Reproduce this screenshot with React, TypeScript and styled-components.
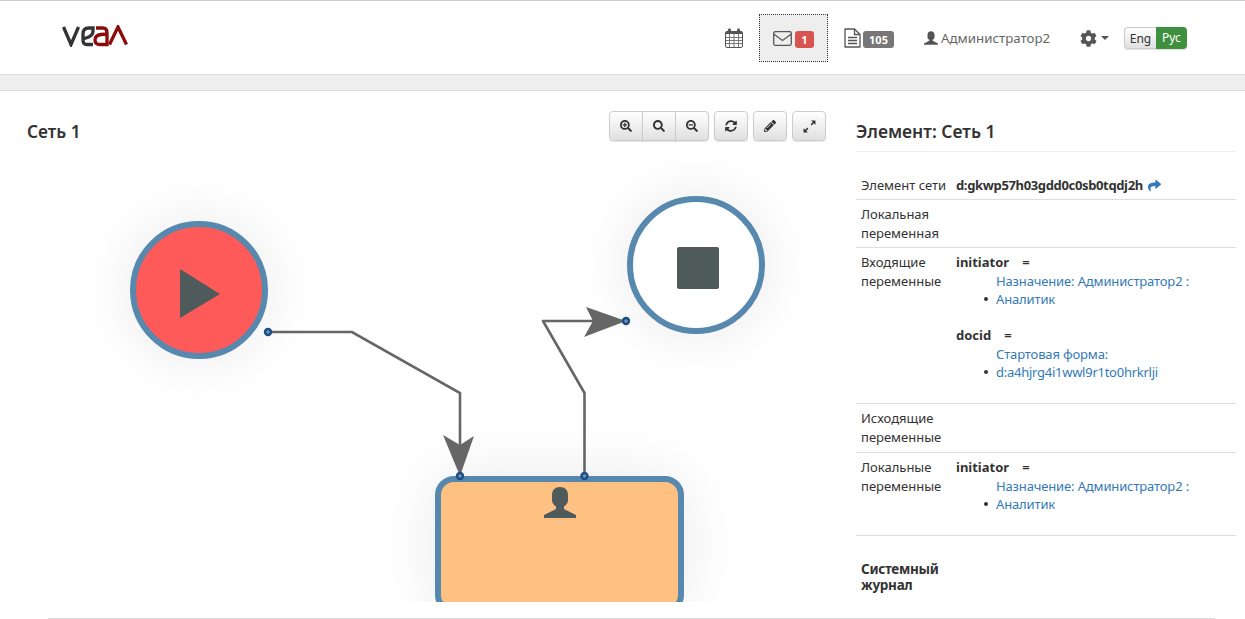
import * as React from 'react';
import styled, { createGlobalStyle } from 'styled-components';
import { FaCog, FaPencilAlt, FaSearch, FaSearchMinus, FaSearchPlus, FaShare, FaSyncAlt } from 'react-icons/fa';

const GlobalStyle = createGlobalStyle`
  html, body {
    margin: 0;
    padding: 0;
    background: #fff;
    overflow: hidden;
  }
  body {
    font-family: "Noto Sans", "Open Sans", sans-serif;
    font-size: 13px;
    line-height: 18.57px;
    color: #333;
  }
`;

const Page = styled.div`
  width: 1245px;
  height: 619px;
  overflow: hidden;
  display: flex;
  flex-direction: column;
`;

const Header = styled.header`
  height: 73px;
  border-top: 1px solid #ccc;
  display: flex;
  align-items: center;
  padding: 0 58px 0 62px;
`;

const LogoSvg = styled.svg`
  width: 66px;
  height: 22px;
  margin-top: -3px;
  flex: none;
`;

const Nav = styled.nav`
  margin-left: auto;
  display: flex;
  align-items: center;
  height: 48px;
  margin-top: 1px;
`;

const NavIcon = styled.span`
  display: flex;
  align-items: center;
  color: #555;
`;

const CalendarItem = styled.div`
  display: flex;
  align-items: center;
  margin-right: 16px;
`;

const MailItem = styled.div`
  width: 69px;
  height: 48px;
  box-sizing: border-box;
  border: 1px dotted #333;
  background: #eee;
  display: flex;
  align-items: center;
  justify-content: center;
  gap: 3px;
  margin-right: 16px;
`;

const FileItem = styled.div`
  display: flex;
  align-items: center;
  gap: 2px;
  margin-right: 30px;
`;

const Badge = styled.span<{ $bg: string; $w: number }>`
  width: ${(p) => p.$w}px;
  height: 17px;
  margin-top: 2px;
  background: ${(p) => p.$bg};
  color: #fff;
  border-radius: 3px;
  font-size: 11px;
  font-weight: 700;
  line-height: 17px;
  text-align: center;
  display: block;
`;

const UserItem = styled.div`
  display: flex;
  align-items: center;
  gap: 3px;
  color: #666;
  font-size: 13.3px;
  margin-right: 30px;
  width: 126px;
  white-space: nowrap;
`;

const GearItem = styled.div`
  display: flex;
  align-items: center;
  gap: 4px;
  margin-right: 15px;
`;

const Caret = styled.span`
  width: 0;
  height: 0;
  border-left: 4px solid transparent;
  border-right: 4px solid transparent;
  border-top: 4px solid #555;
`;

const LangGroup = styled.div`
  display: flex;
  height: 22px;
  border-radius: 4px;
  box-shadow: 0 1px 1px rgba(0, 0, 0, 0.12);
  font-size: 12px;
  line-height: 21px;
`;

const LangEng = styled.span`
  width: 32px;
  box-sizing: border-box;
  text-align: center;
  border: 1px solid #ccc;
  border-right: 0;
  border-radius: 4px 0 0 4px;
  background: linear-gradient(#fff, #e0e0e0);
  color: #333;
`;

const LangRu = styled.span`
  width: 31px;
  text-align: center;
  border-radius: 0 4px 4px 0;
  background: #3e8f3e;
  color: #fff;
`;

const GrayBar = styled.div`
  height: 15px;
  background: #eee;
  border-top: 1px solid #ddd;
  border-bottom: 1px solid #ddd;
  flex: none;
`;

const Main = styled.main`
  display: flex;
  flex: 1;
  min-height: 0;
`;

const NetColumn = styled.section`
  width: 841px;
  flex: none;
  display: flex;
  flex-direction: column;
`;

const NetHead = styled.div`
  height: 69px;
  box-sizing: border-box;
  padding: 20px 15px 0 27px;
  display: flex;
  justify-content: space-between;
  align-items: flex-start;
`;

const NetTitle = styled.h3`
  margin: 11px 0 0;
  font-size: 17.3px;
  line-height: 20px;
  font-weight: 600;
  color: #333;
`;

const Toolbar = styled.div`
  display: flex;
  gap: 5px;
`;

const BtnGroup = styled.div`
  display: flex;
`;

const ToolBtn = styled.button<{ $w?: number; $joined?: 'left' | 'mid' | 'right' }>`
  width: ${(p) => p.$w ?? 34}px;
  height: 30px;
  padding: 0;
  display: flex;
  align-items: center;
  justify-content: center;
  color: #333;
  font-size: 12px;
  background: linear-gradient(#fff, #e0e0e0);
  border: 1px solid #ccc;
  border-radius: ${(p) =>
    p.$joined === 'left' ? '4px 0 0 4px' : p.$joined === 'mid' ? '0' : p.$joined === 'right' ? '0 4px 4px 0' : '4px'};
  margin-left: ${(p) => (p.$joined && p.$joined !== 'left' ? '-1px' : '0')};
  box-shadow: 0 1px 1px rgba(0, 0, 0, 0.1);
`;

const Canvas = styled.div`
  position: relative;
  height: 442px;
  overflow: hidden;
`;

const Wires = styled.svg`
  position: absolute;
  left: 0;
  top: 0;
  width: 841px;
  height: 442px;
  z-index: 2;
`;

const Node = styled.div<{ $x: number; $y: number; $bg: string }>`
  position: absolute;
  left: ${(p) => p.$x}px;
  top: ${(p) => p.$y}px;
  box-sizing: border-box;
  border: 6px solid #5788ae;
  background: ${(p) => p.$bg};
  box-shadow: 0 0 60px rgba(0, 0, 0, 0.09);
  display: flex;
  justify-content: center;
`;

const RoundNode = styled(Node)`
  width: 138px;
  height: 138px;
  border-radius: 50%;
  align-items: center;
`;

const TaskNode = styled(Node)`
  width: 249px;
  height: 138px;
  border-radius: 19px;
  padding-top: 5px;
`;

const StopMark = styled.div`
  width: 42px;
  height: 42px;
  border-radius: 2px;
  background: #4f5b5b;
  margin-left: 4px;
  margin-top: 6px;
`;

const PlayMark = styled.svg`
  width: 40px;
  height: 49px;
  margin-left: 2px;
  margin-top: 6px;
`;

const TaskUser = styled.svg`
  width: 32px;
  height: 31px;
`;

const DetailColumn = styled.aside`
  width: 380px;
  margin-left: 15px;
  flex: none;
`;

const DetailTitle = styled.h3`
  margin: 0;
  height: 61px;
  box-sizing: border-box;
  padding-top: 29px;
  border-bottom: 1px solid #eee;
  font-size: 17.5px;
  line-height: 22px;
  font-weight: 600;
  color: #333;
`;

const Rows = styled.div`
  margin-top: 18px;
`;

const Row = styled.div<{ $h: number; $top?: number }>`
  display: grid;
  grid-template-columns: 95px 1fr;
  height: ${(p) => p.$h}px;
  box-sizing: border-box;
  padding: ${(p) => p.$top ?? 5}px 5px 5px;
  border-bottom: 1px solid #ddd;
`;

const RowLabel = styled.div`
  color: #333;
`;

const VarName = styled.div`
  font-weight: 700;
  white-space: pre;
  word-spacing: 1px;
`;

const RefBlock = styled.div`
  padding-left: 40px;
  margin-bottom: 17.5px;
`;

const RefLine = styled.a<{ $bullet?: boolean; $spacing: number }>`
  display: block;
  position: relative;
  color: #337ab7;
  white-space: nowrap;
  letter-spacing: ${(p) => p.$spacing}px;

  &::before {
    content: ${(p) => (p.$bullet ? "''" : 'none')};
    position: absolute;
    left: -12px;
    top: 7px;
    width: 4px;
    height: 4px;
    border-radius: 50%;
    background: #333;
  }
`;

const ElementId = styled.span`
  font-weight: 700;
  display: inline-flex;
  align-items: center;
  gap: 5px;
  white-space: nowrap;
  letter-spacing: -0.35px;
`;

const ShareIcon = styled.span`
  display: flex;
  color: #337ab7;
  font-size: 13px;
`;

const JournalHead = styled.h4`
  margin: 26px 0 0 5px;
  width: 90px;
  font-size: 13.5px;
  line-height: 15.5px;
  font-weight: 700;
  letter-spacing: -0.3px;
`;

const FooterRule = styled.div`
  height: 1px;
  background: #ddd;
  margin: 0 30px 0 48px;
  flex: none;
`;

function Calendar() {
  return (
    <svg width="18" height="20" viewBox="0 0 18 20">
      <rect x="0.5" y="3.5" width="17" height="16" rx="1.5" fill="#fff" stroke="#555" />
      <rect x="1" y="3" width="16" height="3" fill="#555" />
      <rect x="3" y="0.500" width="3" height="5" rx="1.2" fill="#555" />
      <rect x="12" y="0.500" width="3" height="5" rx="1.2" fill="#555" />
      <path d="M1 9.500H17M1 12.500H17M1 15.500H17M4.500 6V19M9 6V19M13.500 6V19" stroke="#777" strokeWidth="1" fill="none" />
    </svg>
  );
}

function Envelope() {
  return (
    <svg width="19" height="15" viewBox="0 0 19 15" fill="none" stroke="#555" strokeWidth="1.300">
      <rect x="0.700" y="0.700" width="17.600" height="13.600" rx="1.500" />
      <path d="M0.700 3L9.500 9.500L18.300 3" />
    </svg>
  );
}

function FileDoc() {
  return (
    <svg width="17" height="20" viewBox="0 0 17 20" fill="none" stroke="#555" strokeWidth="1.300">
      <path d="M1 1H10.500L16 6.500V19H1Z" strokeLinejoin="round" />
      <path d="M10.500 1V6.500H16" />
      <path d="M4 9.500H13M4 12.500H13M4 15.500H13" />
    </svg>
  );
}

function Expand() {
  return (
    <svg width="13" height="13" viewBox="0 0 12 12" fill="#333">
      <path d="M7.500 0.500H11.500V4.500L10 3L8 5L7 4L9 2Z" />
      <path d="M4.500 11.500H0.500V7.500L2 9L4 7L5 8L3 10Z" />
    </svg>
  );
}

function UserGlyph() {
  return <path d="M16 0C11 0 8 3 8 8V13C8 16 9.500 18 12 19.500V22L0 28V31H32V28L20 22V19.500C22.500 18 24 16 24 13V8C24 3 21 0 16 0Z" />;
}

function VarRows({ name, lines, tight }: { name: string; lines: string[]; tight?: boolean }) {
  return (
    <>
      <VarName>{name + '   ='}</VarName>
      <RefBlock>
        <RefLine $spacing={-0.14}>{lines[0]}</RefLine>
        <RefLine $bullet $spacing={tight ? -0.26 : -0.14}>
          {lines[1]}
        </RefLine>
      </RefBlock>
    </>
  );
}

function Endpoint({ x, y }: { x: number; y: number }) {
  return <circle cx={x} cy={y} r="3" fill="#6f93b8" stroke="#1c4d85" strokeWidth="2.400" />;
}

export default function App() {
  return (
    <Page>
      <GlobalStyle />
      <Header>
        <LogoSvg viewBox="0 0 66 22" fill="none" strokeWidth="3.300">
          <path d="M1.500 2L9 19.500L16.500 2" stroke="#333" />
          <path d="M31 19.500H25C22 19.500 21 18 21 15V9C21 5 23 3 26.500 3H31V6C31 10 28 12 24 13L21 14" stroke="#333" />
          <path d="M34 3H41C44 3 45 5 45 8V19.500H38C35 19.500 33 18 33 15C33 12 35.500 10 39 9.500L45 9" stroke="#8b0a0a" />
          <path d="M47.500 19.500L56 2L64.500 19.500" stroke="#8b0a0a" />
        </LogoSvg>
        <Nav>
          <CalendarItem>
            <Calendar />
          </CalendarItem>
          <MailItem>
            <NavIcon>
              <Envelope />
            </NavIcon>
            <Badge $bg="#d9534f" $w={19}>
              1
            </Badge>
          </MailItem>
          <FileItem>
            <NavIcon>
              <FileDoc />
            </NavIcon>
            <Badge $bg="#777" $w={31}>
              105
            </Badge>
          </FileItem>
          <UserItem>
            <NavIcon>
              <svg width="14" height="14" viewBox="0 0 32 31" fill="#555">
                <UserGlyph />
              </svg>
            </NavIcon>
            Администратор2
          </UserItem>
          <GearItem>
            <NavIcon>
              <FaCog size={17} />
            </NavIcon>
            <Caret />
          </GearItem>
          <LangGroup>
            <LangEng>Eng</LangEng>
            <LangRu>Рус</LangRu>
          </LangGroup>
        </Nav>
      </Header>
      <GrayBar />
      <Main>
        <NetColumn>
          <NetHead>
            <NetTitle>Сеть 1</NetTitle>
            <Toolbar>
              <BtnGroup>
                <ToolBtn $joined="left">
                  <FaSearchPlus />
                </ToolBtn>
                <ToolBtn $joined="mid">
                  <FaSearch />
                </ToolBtn>
                <ToolBtn $joined="right">
                  <FaSearchMinus />
                </ToolBtn>
              </BtnGroup>
              <ToolBtn>
                <FaSyncAlt />
              </ToolBtn>
              <ToolBtn>
                <FaPencilAlt />
              </ToolBtn>
              <ToolBtn>
                <Expand />
              </ToolBtn>
            </Toolbar>
          </NetHead>
          <Canvas>
            <RoundNode $x={130} $y={61} $bg="#ff5a5a">
              <PlayMark viewBox="0 0 40 49">
                <path d="M0 0L40 25L0 49Z" fill="#4f5b5b" />
              </PlayMark>
            </RoundNode>
            <RoundNode $x={627} $y={36} $bg="#fff">
              <StopMark />
            </RoundNode>
            <TaskNode $x={435} $y={316} $bg="#ffc182">
              <TaskUser viewBox="0 0 32 31" fill="#4f5b5b">
                <UserGlyph />
              </TaskUser>
            </TaskNode>
            <Wires viewBox="0 0 841 442" fill="none">
              <path d="M268 172H352L460 233V300" stroke="#666" strokeWidth="2.600" />
              <path d="M584.500 316V233L543 161H600" stroke="#666" strokeWidth="2.600" strokeLinejoin="round" />
              <path d="M460 316L443 275L460 285L474 276Z" fill="#666" />
              <path d="M626 161L586 147L593 161L584 177Z" fill="#666" />
              <Endpoint x={268} y={172} />
              <Endpoint x={460} y={316} />
              <Endpoint x={584.5} y={316} />
              <Endpoint x={626} y={161} />
            </Wires>
          </Canvas>
        </NetColumn>
        <DetailColumn>
          <DetailTitle>Элемент: Сеть 1</DetailTitle>
          <Rows>
            <Row $h={30} $top={6}>
              <RowLabel>Элемент сети</RowLabel>
              <div>
                <ElementId>
                  d:gkwp57h03gdd0c0sb0tqdj2h
                  <ShareIcon>
                    <FaShare />
                  </ShareIcon>
                </ElementId>
              </div>
            </Row>
            <Row $h={48}>
              <RowLabel>Локальная переменная</RowLabel>
              <div />
            </Row>
            <Row $h={156}>
              <RowLabel>Входящие переменные</RowLabel>
              <div>
                <VarRows name="initiator" lines={['Назначение: Администратор2 :', 'Аналитик']} />
                <VarRows name="docid" lines={['Стартовая форма:', 'd:a4hjrg4i1wwl9r1to0hrkrlji']} tight />
              </div>
            </Row>
            <Row $h={49}>
              <RowLabel>Исходящие переменные</RowLabel>
              <div />
            </Row>
            <Row $h={83}>
              <RowLabel>Локальные переменные</RowLabel>
              <div>
                <VarRows name="initiator" lines={['Назначение: Администратор2 :', 'Аналитик']} />
              </div>
            </Row>
          </Rows>
          <JournalHead>Системный журнал</JournalHead>
        </DetailColumn>
      </Main>
      <FooterRule />
    </Page>
  );
}
